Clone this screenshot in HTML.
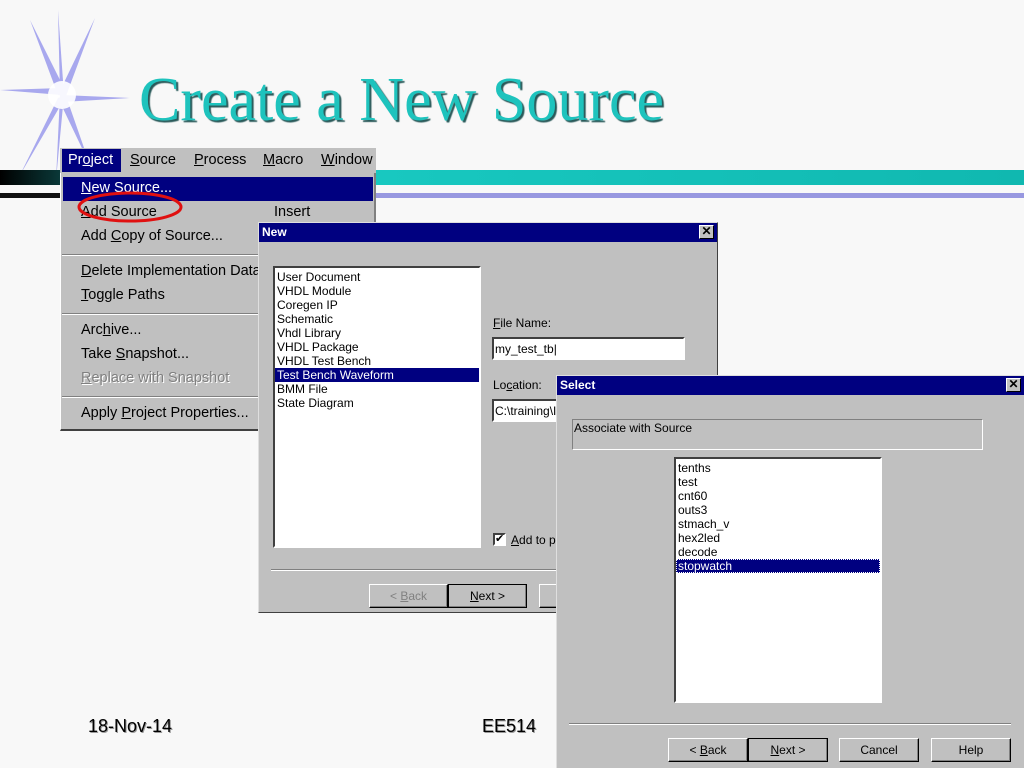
<!DOCTYPE html>
<html><head><meta charset="utf-8"><style>
*{margin:0;padding:0;box-sizing:border-box}
body{width:1024px;height:768px;background:#f8f8f8;position:relative;overflow:hidden;font-family:"Liberation Sans",Arial,sans-serif}
.a{position:absolute}
.w{font-size:12px;color:#000;white-space:nowrap}
.m{font-size:14.5px;color:#000;white-space:nowrap}
u{text-decoration:underline}
.gray{background:#c0c0c0}
.title{background:#000080;color:#fff;font-weight:bold;font-size:12px;padding:2px 3px}
.xb{position:absolute;right:3px;top:2px;width:15px;height:14px;background:#c0c0c0;border:1px solid;border-color:#fff #000 #000 #fff;font-size:12px;line-height:11px;text-align:center;color:#000;font-weight:bold}
.lb{background:#fff;border:2px solid;border-color:#404040 #fff #fff #404040;font-size:12px;line-height:14px}
.lb div{padding-left:2px}
.sel{background:#000080;color:#fff}
.btn{position:absolute;height:24px;background:#c0c0c0;border:1px solid;border-color:#fff #000 #000 #fff;font-size:12px;text-align:center;line-height:22px;box-shadow:inset -1px -1px #808080}
</style></head><body>
<svg class="a" style="left:0;top:0" width="140" height="200">
<g fill="#a8a8ee">
<polygon points="62,95 0,90 62,88"/>
<polygon points="62,95 130,98 62,102"/>
<polygon points="58,95 30,20 66,92"/>
<polygon points="58,95 95,18 66,96"/>
<polygon points="58,98 20,175 66,96"/>
<polygon points="58,98 90,165 66,96"/>
<polygon points="60,95 58,10 64,95"/>
<polygon points="60,95 56,180 64,95"/>
</g>
<circle cx="62" cy="95" r="14" fill="#fff" opacity=".9"/>
</svg>
<div class="a" style="left:139px;top:65px;font-family:'Liberation Serif',serif;font-size:62px;color:#1ec3bd;text-shadow:2px 2px 1px #2a5a5a;white-space:nowrap">Create a New Source</div>
<div class="a" style="left:0;top:170px;width:62px;height:15px;background:linear-gradient(90deg,#000,#0a3a3a)"></div>
<div class="a" style="left:375px;top:170px;width:649px;height:15px;background:linear-gradient(90deg,#18c8c0,#10b8b0)"></div>
<div class="a" style="left:0;top:193px;width:62px;height:5px;background:#111"></div>
<div class="a" style="left:375px;top:193px;width:649px;height:5px;background:#9898e0"></div>
<div class="a gray" style="left:60px;top:148px;width:316px;height:25px"></div>
<div class="a" style="left:62px;top:149px;width:59px;height:23px;background:#000080"></div>
<div class="a m" style="left:68px;top:152px;color:#fff">Pr<u>o</u>ject</div>
<div class="a m" style="left:130px;top:152px"><u>S</u>ource</div>
<div class="a m" style="left:194px;top:152px"><u>P</u>rocess</div>
<div class="a m" style="left:263px;top:152px"><u>M</u>acro</div>
<div class="a m" style="left:321px;top:152px"><u>W</u>indow</div>
<div class="a gray" style="left:60px;top:173px;width:316px;height:258px;border-right:2px solid #808080;border-bottom:2px solid #404040;border-left:1px solid #fff"></div>
<div class="a" style="left:63px;top:177px;width:310px;height:24px;background:#000080"></div>
<div class="a m" style="left:81px;top:180px;color:#fff"><u>N</u>ew Source...</div>
<div class="a m" style="left:81px;top:204px"><u>A</u>dd Source</div>
<div class="a m" style="left:274px;top:204px">Insert</div>
<div class="a m" style="left:81px;top:228px">Add <u>C</u>opy of Source...</div>
<div class="a" style="left:62px;top:254px;width:312px;height:2px;border-top:1px solid #808080;border-bottom:1px solid #fff"></div>
<div class="a m" style="left:81px;top:263px"><u>D</u>elete Implementation Data</div>
<div class="a m" style="left:81px;top:287px"><u>T</u>oggle Paths</div>
<div class="a" style="left:62px;top:313px;width:312px;height:2px;border-top:1px solid #808080;border-bottom:1px solid #fff"></div>
<div class="a m" style="left:81px;top:322px">Arc<u>h</u>ive...</div>
<div class="a m" style="left:81px;top:346px">Take <u>S</u>napshot...</div>
<div class="a m" style="left:81px;top:370px;color:#808080;text-shadow:1px 1px #fff"><u>R</u>eplace with Snapshot</div>
<div class="a" style="left:62px;top:396px;width:312px;height:2px;border-top:1px solid #808080;border-bottom:1px solid #fff"></div>
<div class="a m" style="left:81px;top:405px">Apply <u>P</u>roject Properties...</div>
<svg class="a" style="left:75px;top:190px" width="110" height="36"><ellipse cx="55" cy="17" rx="51" ry="14" fill="none" stroke="#e01010" stroke-width="3"/></svg>
<div class="a gray" style="left:258px;top:222px;width:460px;height:391px;border:1px solid;border-color:#dfdfdf #404040 #404040 #dfdfdf"></div>
<div class="a title" style="left:259px;top:223px;width:458px;height:19px">New<div class="xb">✕</div></div>
<div class="a lb" style="left:273px;top:266px;width:208px;height:282px;padding-top:2px">
<div>User Document</div><div>VHDL Module</div><div>Coregen IP</div><div>Schematic</div><div>Vhdl Library</div><div>VHDL Package</div><div>VHDL Test Bench</div><div class="sel">Test Bench Waveform</div><div>BMM File</div><div>State Diagram</div></div>
<div class="a w" style="left:493px;top:316px"><u>F</u>ile Name:</div>
<div class="a lb" style="left:492px;top:337px;width:193px;height:23px;padding:3px 1px">my_test_tb|</div>
<div class="a w" style="left:493px;top:378px">Lo<u>c</u>ation:</div>
<div class="a lb" style="left:492px;top:399px;width:100px;height:23px;padding:3px 1px">C:\training\I</div>
<div class="a" style="left:493px;top:533px;width:13px;height:13px;background:#fff;border:2px solid;border-color:#404040 #fff #fff #404040;font-size:11px;line-height:9px;text-align:center">✔</div>
<div class="a w" style="left:511px;top:533px"><u>A</u>dd to p</div>
<div class="a" style="left:271px;top:569px;width:300px;height:2px;border-top:1px solid #808080;border-bottom:1px solid #fff"></div>
<div class="btn" style="left:369px;top:584px;width:79px;color:#808080">&lt; <u>B</u>ack</div>
<div class="btn" style="left:448px;top:584px;width:79px;border:1px solid #000"><u>N</u>ext &gt;</div>
<div class="btn" style="left:539px;top:584px;width:30px"></div>
<div class="a gray" style="left:556px;top:375px;width:468px;height:393px;border-left:1px solid #dfdfdf;border-top:1px solid #dfdfdf"></div>
<div class="a title" style="left:557px;top:376px;width:467px;height:19px">Select<div class="xb">✕</div></div>
<div class="a" style="left:572px;top:419px;width:411px;height:31px;border:1px solid;border-color:#808080 #fff #fff #808080;font-size:12px;padding:1px 0 0 1px">Associate with Source</div>
<div class="a lb" style="left:674px;top:457px;width:208px;height:246px;padding-top:2px">
<div>tenths</div><div>test</div><div>cnt60</div><div>outs3</div><div>stmach_v</div><div>hex2led</div><div>decode</div><div class="sel" style="outline:1px dotted #fff;outline-offset:-1px">stopwatch</div></div>
<div class="a" style="left:569px;top:723px;width:442px;height:2px;border-top:1px solid #808080;border-bottom:1px solid #fff"></div>
<div class="btn" style="left:668px;top:738px;width:80px">&lt; <u>B</u>ack</div>
<div class="btn" style="left:748px;top:738px;width:80px;border:1px solid #000"><u>N</u>ext &gt;</div>
<div class="btn" style="left:839px;top:738px;width:80px">Cancel</div>
<div class="btn" style="left:931px;top:738px;width:80px">Help</div>
<div class="a" style="left:88px;top:716px;font-size:18px;color:#000;text-shadow:1px 1px #999">18-Nov-14</div>
<div class="a" style="left:482px;top:716px;font-size:18px;color:#000;text-shadow:1px 1px #999">EE514</div>
</body></html>
